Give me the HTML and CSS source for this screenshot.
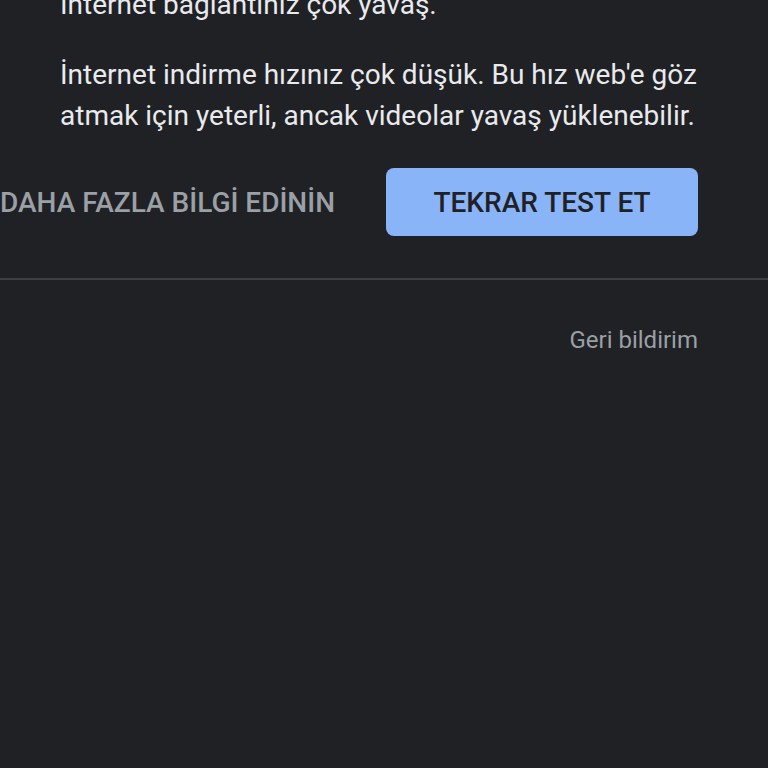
FILE: index.html
```html
<!DOCTYPE html>
<html lang="tr">
<head>
<meta charset="utf-8">
<link rel="stylesheet" href="styles.css">
</head>
<body>
<main class="page">
  <section class="result">
    <p class="headline">İnternet bağlantınız çok yavaş.</p>
    <p class="detail">İnternet indirme hızınız çok düşük. Bu hız web'e göz atmak için yeterli, ancak videolar yavaş yüklenebilir.</p>
  </section>
  <div class="actions">
    <span class="link-btn">DAHA FAZLA BİLGİ EDİNİN</span>
    <span class="primary-btn">TEKRAR TEST ET</span>
  </div>
  <hr class="divider">
  <div class="footer">
    <span class="feedback">Geri bildirim</span>
  </div>
</main>
</body>
</html>
```

FILE: styles.css
```css
html, body {
  margin: 0;
  padding: 0;
  background: #202124;
  height: 100%;
  overflow: hidden;
}
.page {
  font-family: Roboto, "Noto Sans", sans-serif;
  color: #e8eaed;
}
.result {
  padding: 0 60px 0 60px;
}
.headline {
  margin: -15px 0 0 0;
  font-size: 28px;
  line-height: 40px;
  white-space: nowrap;
}
.detail {
  margin: 29px 0 0 0;
  font-size: 28px;
  line-height: 41px;
}
.actions {
  display: flex;
  justify-content: flex-end;
  align-items: center;
  gap: 51px;
  padding: 0 70px 0 0;
  margin-top: 32px;
}
.link-btn {
  color: #9aa0a6;
  font-size: 28px;
  font-weight: 500;
  white-space: nowrap;
}
.primary-btn {
  display: flex;
  align-items: center;
  justify-content: center;
  width: 312px;
  height: 68px;
  box-sizing: border-box;
  background: #8ab4f8;
  color: #202124;
  border-radius: 8px;
  font-size: 28px;
  font-weight: 500;
}
.divider {
  border: 0;
  height: 2px;
  background: #3c4043;
  margin: 42px 0 0 0;
}
.footer {
  display: flex;
  justify-content: flex-end;
  padding: 46px 70px 0 0;
}
.feedback {
  color: #9aa0a6;
  font-size: 24px;
  line-height: 28px;
}
```
